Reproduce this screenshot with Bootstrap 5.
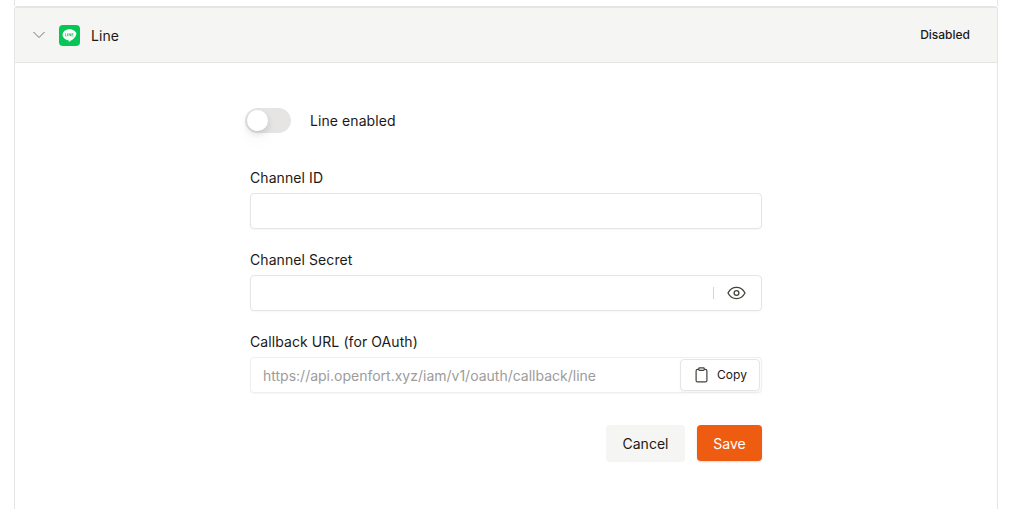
<!doctype html>
<html lang="en">
<head>
<meta charset="utf-8">
<title>Line provider</title>
<link rel="stylesheet" href="https://cdn.jsdelivr.net/npm/bootstrap@5.3.0/dist/css/bootstrap.min.css">
<style>
html,body{height:521px;overflow:hidden;background:#fff}
body{font-family:Inter,"Liberation Sans",sans-serif;color:#1c1917;font-size:14px;letter-spacing:.08px}
.shell{padding:0 12px 0 14px}
.prev-edge{height:6px;border-left:1px solid #e7e5e4;border-right:1px solid #e7e5e4;width:100%}
.panel{border:1px solid #e7e5e4;border-top-width:2px;border-bottom:0;border-radius:4px 4px 0 0;height:503px}
.panel-head{height:55px;background:#f5f5f4;border-bottom:1px solid #e7e5e4;padding:0 27px 0 17px}
.logo-box{width:21px;height:21px;border-radius:4px;background:#06c755;flex:none;margin:0 11px 0 13px}
.state{font-size:12px;font-weight:500;letter-spacing:0}
.form-area{width:512px;margin:44px 0 0 235px}
.toggle-row{height:26px;gap:19px;margin-bottom:35px}
.toggle-track{height:25px;width:46px;border-radius:13px;background:#e7e5e4;margin-left:-5px;position:relative}
.toggle-knob{position:absolute;left:2px;top:2px;width:21px;height:21px;border-radius:50%;background:#fff;box-shadow:0 3px 6px rgba(0,0,0,.12),0 9px 18px rgba(0,0,0,.04)}
.field-label{font-size:14px;margin-bottom:5px;line-height:20px;display:block}
.field-box{height:36px;border:1px solid #e7e5e4;border-radius:4px;background:#fff;box-shadow:0 1px 2px rgba(0,0,0,.04);margin-bottom:21px}
.url-text{font-size:14px;color:#9c9c9c;padding-left:12px;white-space:nowrap;letter-spacing:0}
.url-box{margin-bottom:32px;border-color:#f0efee}
.divider{width:1px;height:12px;background:#d6d3d1}
.eye-wrap{gap:13px;padding-right:15px}
.copy-btn{height:32px;width:80px;font-size:12px;font-weight:400;border:1px solid #e7e5e4;border-radius:4px;background:#fff;gap:9px;padding:0 0 1px 2px;margin-right:1px;color:#1c1917;box-shadow:0 1px 2px rgba(0,0,0,.05);letter-spacing:.1px}
.act-cancel{width:79px;height:37px;background:#f5f5f4;border:0;border-radius:4px;font-size:14px;color:#1c1917;padding:0}
.act-save{width:65px;height:36px;background:#ee5c11;border:0;border-radius:4px;font-size:14px;color:#fff;padding:0;box-shadow:0 1px 2px rgba(0,0,0,.15)}
.act-save:hover{background:#ee5c11;color:#fff}
.act-cancel:hover{background:#f5f5f4}
</style>
</head>
<body>
<div class="shell">
  <div class="prev-edge"></div>
  <section class="panel">
    <header class="panel-head d-flex align-items-center">
      <svg width="14" height="8" viewBox="0 0 14 8" fill="none" stroke="#78716c" stroke-width="1" aria-hidden="true"><path d="M1.500 1l5.500 5.500L12.500 1"/></svg>
      <span class="logo-box d-flex align-items-center justify-content-center">
        <svg width="17" height="17" viewBox="0 0 16 16" aria-hidden="true"><path fill="#fff" d="M8 2.200c-3.600 0-6.500 2.300-6.500 5.200 0 2.600 2.300 4.700 5.400 5.100.5.100.4.400.3 1-.1.400.2.500.6.300 1.500-.9 5.700-3 6.400-6.400.2-.6.300-.7.300-1C14.500 4.500 11.600 2.200 8 2.200z"/><path fill="#06c755" d="M3.900 5.900h.6v2.400h1v.5H3.900zM6 5.900h.6v2.900H6zM7.200 5.900h.5l1.200 1.800V5.900h.6v2.900h-.5L7.800 7v1.800h-.6zM10 5.900h1.800v.5h-1.200v.7h1.100v.5h-1.100v.7h1.200v.5H10z"/></svg>
      </span>
      <span>Line</span>
      <span class="state ms-auto">Disabled</span>
    </header>
    <div class="form-area">
      <div class="toggle-row d-flex align-items-center">
        <span class="toggle-track"><span class="toggle-knob"></span></span>
        <span>Line enabled</span>
      </div>
      <label class="field-label">Channel ID</label>
      <div class="field-box"></div>
      <label class="field-label">Channel Secret</label>
      <div class="field-box d-flex align-items-center justify-content-end eye-wrap">
        <span class="divider"></span>
        <svg width="19" height="14" viewBox="0 0 19 14" fill="none" stroke="#44403c" stroke-width="1.300" aria-hidden="true"><path d="M1 7c2-3.800 5-5.600 8.500-5.600S16 3.200 18 7c-2 3.800-5 5.600-8.500 5.600S3 10.800 1 7z"/><circle cx="9.500" cy="7" r="2.400"/></svg>
      </div>
      <label class="field-label">Callback URL (for OAuth)</label>
      <div class="field-box url-box d-flex align-items-center justify-content-between">
        <span class="url-text">https://api.openfort.xyz/iam/v1/oauth/callback/line</span>
        <button type="button" class="btn copy-btn d-flex align-items-center justify-content-center">
          <svg width="13" height="16" viewBox="0 0 13 16" fill="none" stroke="#44403c" stroke-width="1.200" aria-hidden="true"><path d="M3.800 2.400H2.600c-.9 0-1.500.6-1.500 1.500v9.500c0 .9.600 1.500 1.500 1.500h7.800c.9 0 1.500-.6 1.500-1.500V3.900c0-.9-.6-1.500-1.500-1.500H9.200"/><rect x="3.800" y=".8" width="5.400" height="2.600" rx=".8"/></svg>
          <span>Copy</span>
        </button>
      </div>
      <div class="d-flex justify-content-end gap-2">
        <button type="button" class="btn act-cancel me-1">Cancel</button>
        <button type="button" class="btn act-save">Save</button>
      </div>
    </div>
  </section>
</div>
</body>
</html>
